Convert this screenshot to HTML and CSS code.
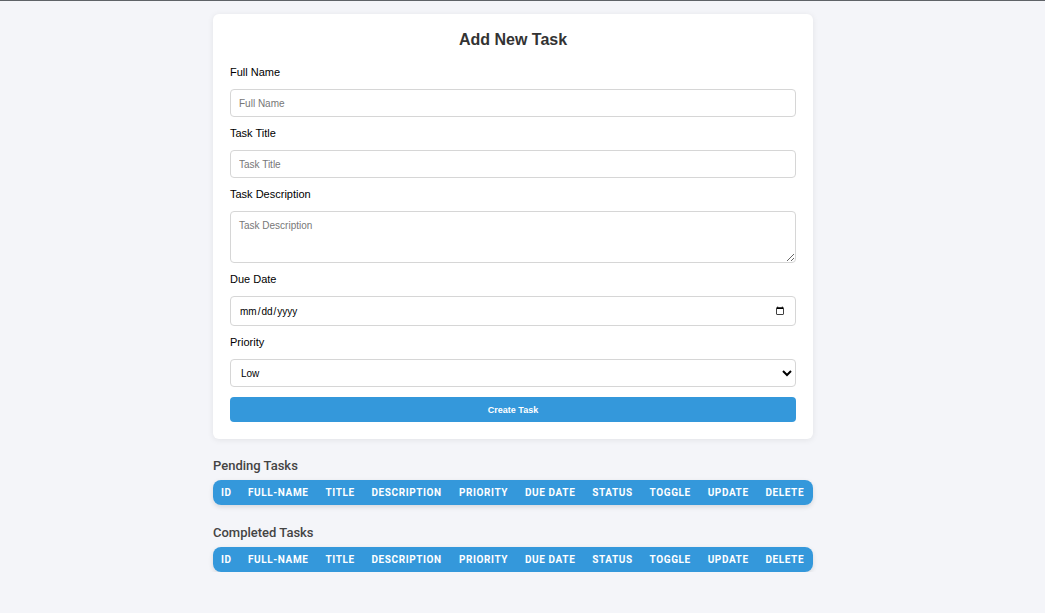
FILE: index.html
```html
<!DOCTYPE html>
<html>

<head>
    <meta charset="utf-8">
    <title>Task Manager</title>

    <link rel="stylesheet" href="styles.css">
</head>

<body>

    <div class="container">
        <form class="task_form" id="taskForm">
            <h2>Add New Task</h2>

            <label for="fullName">Full Name</label>
            <input class="form_input" id="fullName" type="text" placeholder="Full Name">

            <label for="taskTitle">Task Title</label>
            <input class="form_input" id="taskTitle" type="text" placeholder="Task Title">

            <label for="taskDesc">Task Description</label>
            <textarea class="form_input form_area" id="taskDesc" placeholder="Task Description"></textarea>

            <label for="dueDate">Due Date</label>
            <input class="form_input form_date" id="dueDate" type="date">

            <label for="priority">Priority</label>
            <select class="form_input form_select" id="priority">
                <option>Low</option>
                <option>Medium</option>
                <option>High</option>
            </select>

            <button class="create_button" type="button">Create Task</button>
        </form>

        <h3 class="section_title">Pending Tasks</h3>
        <div class="table_box">
            <table class="task_table">
                <thead>
                    <tr>
                        <th>ID</th>
                        <th>Full-Name</th>
                        <th>Title</th>
                        <th>Description</th>
                        <th>Priority</th>
                        <th>Due Date</th>
                        <th>Status</th>
                        <th>Toggle</th>
                        <th>Update</th>
                        <th>Delete</th>
                    </tr>
                </thead>
                <tbody id="pendingBody"></tbody>
            </table>
        </div>

        <h3 class="section_title">Completed Tasks</h3>
        <div class="table_box">
            <table class="task_table">
                <thead>
                    <tr>
                        <th>ID</th>
                        <th>Full-Name</th>
                        <th>Title</th>
                        <th>Description</th>
                        <th>Priority</th>
                        <th>Due Date</th>
                        <th>Status</th>
                        <th>Toggle</th>
                        <th>Update</th>
                        <th>Delete</th>
                    </tr>
                </thead>
                <tbody id="completedBody"></tbody>
            </table>
        </div>
    </div>

</body>

</html>
```
FILE: styles.css
```css
* {
    font-family: 'Liberation Sans', Arial, sans-serif;
    box-sizing: border-box;
}

body {
    margin: 0;
    padding: 0 19px 0 0;
    border-top: 1px solid #5f6368;
    background-color: #f4f5f9;
}

.container {
    width: 600px;
    margin: 13px auto 0;
}

.task_form {
    display: flex;
    flex-direction: column;
    background-color: #ffffff;
    border-radius: 6px;
    box-shadow: 0 1px 6px rgba(0, 0, 0, 0.08);
    padding: 15px 17px 17px;
}

.task_form h2 {
    margin: 0 0 15px;
    font-size: 16px;
    line-height: 22px;
    text-align: center;
    color: #333333;
}

.task_form label {
    font-size: 11px;
    line-height: 13px;
    color: #000000;
    margin-bottom: 10px;
}

.form_input {
    height: 28px;
    margin: 0 0 10px;
    padding: 0 8px;
    border: 1px solid #d6d6d6;
    border-radius: 4px;
    font-size: 10px;
    color: #000000;
    background-color: #ffffff;
    outline: none;
}

.form_input::placeholder {
    color: #777777;
}

.form_area {
    height: 52px;
    padding: 8px;
    resize: vertical;
}

.form_date {
    height: 30px;
}

.form_select {
    padding-left: 6px;
}

.create_button {
    height: 25px;
    border: none;
    border-radius: 4px;
    background-color: #3498db;
    color: #ffffff;
    font-size: 9px;
    font-weight: bold;
    cursor: pointer;
}

.create_button:hover {
    background-color: #2980b9;
}

.section_title {
    margin: 20px 0 6px;
    font-family: Roboto, 'Liberation Sans', sans-serif;
    font-size: 13px;
    line-height: 16px;
    font-weight: 500;
    color: #444444;
}

.task_form + .section_title {
    margin-top: 19px;
}

.table_box {
    border-radius: 8px;
    overflow: hidden;
    box-shadow: 0 2px 5px rgba(0, 0, 0, 0.12);
}

.task_table {
    width: 100%;
    border-collapse: collapse;
}

.task_table th {
    height: 25px;
    padding: 0 8px;
    background-color: #3498db;
    color: #ffffff;
    font-family: Roboto, 'Liberation Sans', sans-serif;
    font-size: 10px;
    font-weight: bold;
    letter-spacing: 0.6px;
    text-transform: uppercase;
    text-align: left;
    white-space: nowrap;
}
```
